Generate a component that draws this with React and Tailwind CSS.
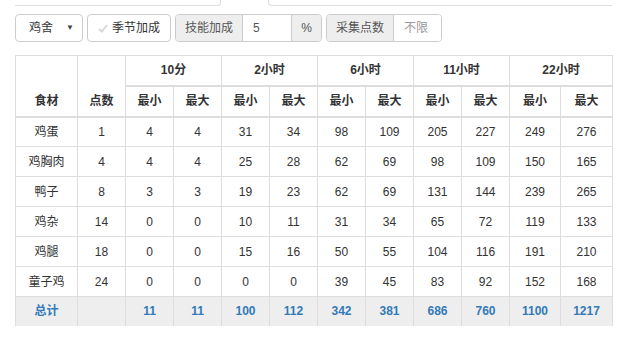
import React from "react";

const rows = [
  ["鸡蛋", 1, 4, 4, 31, 34, 98, 109, 205, 227, 249, 276],
  ["鸡胸肉", 4, 4, 4, 25, 28, 62, 69, 98, 109, 150, 165],
  ["鸭子", 8, 3, 3, 19, 23, 62, 69, 131, 144, 239, 265],
  ["鸡杂", 14, 0, 0, 10, 11, 31, 34, 65, 72, 119, 133],
  ["鸡腿", 18, 0, 0, 15, 16, 50, 55, 104, 116, 191, 210],
  ["童子鸡", 24, 0, 0, 0, 0, 39, 45, 83, 92, 152, 168],
];

const totals = [11, 11, 100, 112, 342, 381, 686, 760, 1100, 1217];
const periods = ["10分", "2小时", "6小时", "11小时", "22小时"];
const widths = ["w-[48px]", "w-[48px]", "w-[48px]", "w-[48px]", "w-[48px]", "w-[48px]", "w-[48px]", "w-[48px]", "w-[51px]", "w-[52px]"];

export default function App() {
  return (
    <div
      className="w-[626px] h-[338px] bg-white text-[12px] text-[#333] overflow-hidden"
      style={{ fontFamily: '"Liberation Sans", "Noto Sans CJK SC", sans-serif' }}
    >
      {/* cut-off inputs at the top */}
      <div className="flex h-[6px]">
        <div className="ml-[15px] w-[206px] h-[6px] border-r border-b border-[#ddd] rounded-br-[4px]" />
        <div className="ml-[47px] w-[344px] h-[6px] border-l border-b border-[#ddd] rounded-bl-[4px]" />
      </div>

      {/* controls */}
      <div className="flex items-center gap-[4px] mt-[8px] ml-[15px] h-[28px]">
        <div className="w-[68px] h-[28px] flex items-center justify-between pl-[13px] pr-[8px] border border-[#ccc] rounded-[4px] text-[#333]">
          <span>鸡舍</span>
          <span className="text-[8px] text-[#444]">▼</span>
        </div>
        <div className="w-[84px] h-[28px] flex items-center pl-[10px] border border-[#ccc] rounded-[4px] text-[#333]">
          <svg width="10" height="9" viewBox="0 0 10 9" className="mr-[4px]">
            <path d="M1 5 L3.8 7.6 L9 1" fill="none" stroke="#d6d6d6" strokeWidth="1.8" />
          </svg>
          <span>季节加成</span>
        </div>
        <div className="flex h-[28px] border border-[#ccc] rounded-[4px] overflow-hidden">
          <div className="w-[67px] flex items-center justify-center bg-[#eee] text-[#555] border-r border-[#ccc]">技能加成</div>
          <div className="w-[48px] flex items-center pl-[10px] bg-white text-[#555]">5</div>
          <div className="w-[30px] flex items-center justify-center bg-[#eee] text-[#555] border-l border-[#ccc]">%</div>
        </div>
        <div className="flex h-[28px] border border-[#ccc] rounded-[4px] overflow-hidden">
          <div className="w-[67px] flex items-center justify-center bg-[#eee] text-[#555] border-r border-[#ccc]">采集点数</div>
          <div className="w-[47px] flex items-center pl-[10px] bg-white text-[#999]">不限</div>
        </div>
      </div>

      {/* table */}
      <table className="mt-[13px] ml-[15px] border-collapse text-center">
        <thead>
          <tr className="h-[30px]">
            <th rowSpan={2} className="w-[62px] border border-[#ddd] border-b-2 align-bottom pb-[6px] font-bold">食材</th>
            <th rowSpan={2} className="w-[48px] border border-[#ddd] border-b-2 align-bottom pb-[6px] font-bold">点数</th>
            {periods.map((p) => (
              <th key={p} colSpan={2} className="border border-[#ddd] border-b-2 font-bold">
                {p}
              </th>
            ))}
          </tr>
          <tr className="h-[31px]">
            {widths.map((w, i) => (
              <th key={i} className={`${w} border border-[#ddd] border-b-2 font-bold`}>
                {i % 2 === 0 ? "最小" : "最大"}
              </th>
            ))}
          </tr>
        </thead>
        <tbody>
          {rows.map((r) => (
            <tr key={r[0]} className="h-[30px]">
              {r.map((c, i) => (
                <td key={i} className="border border-[#ddd]">
                  {c}
                </td>
              ))}
            </tr>
          ))}
          <tr className="h-[29px] bg-[#eee] text-[#337ab7] font-bold">
            <td className="border-x border-[#ddd]">总计</td>
            <td className="border-x border-[#ddd]"></td>
            {totals.map((t, i) => (
              <td key={i} className="border-x border-[#ddd]">
                {t}
              </td>
            ))}
          </tr>
        </tbody>
      </table>
    </div>
  );
}
